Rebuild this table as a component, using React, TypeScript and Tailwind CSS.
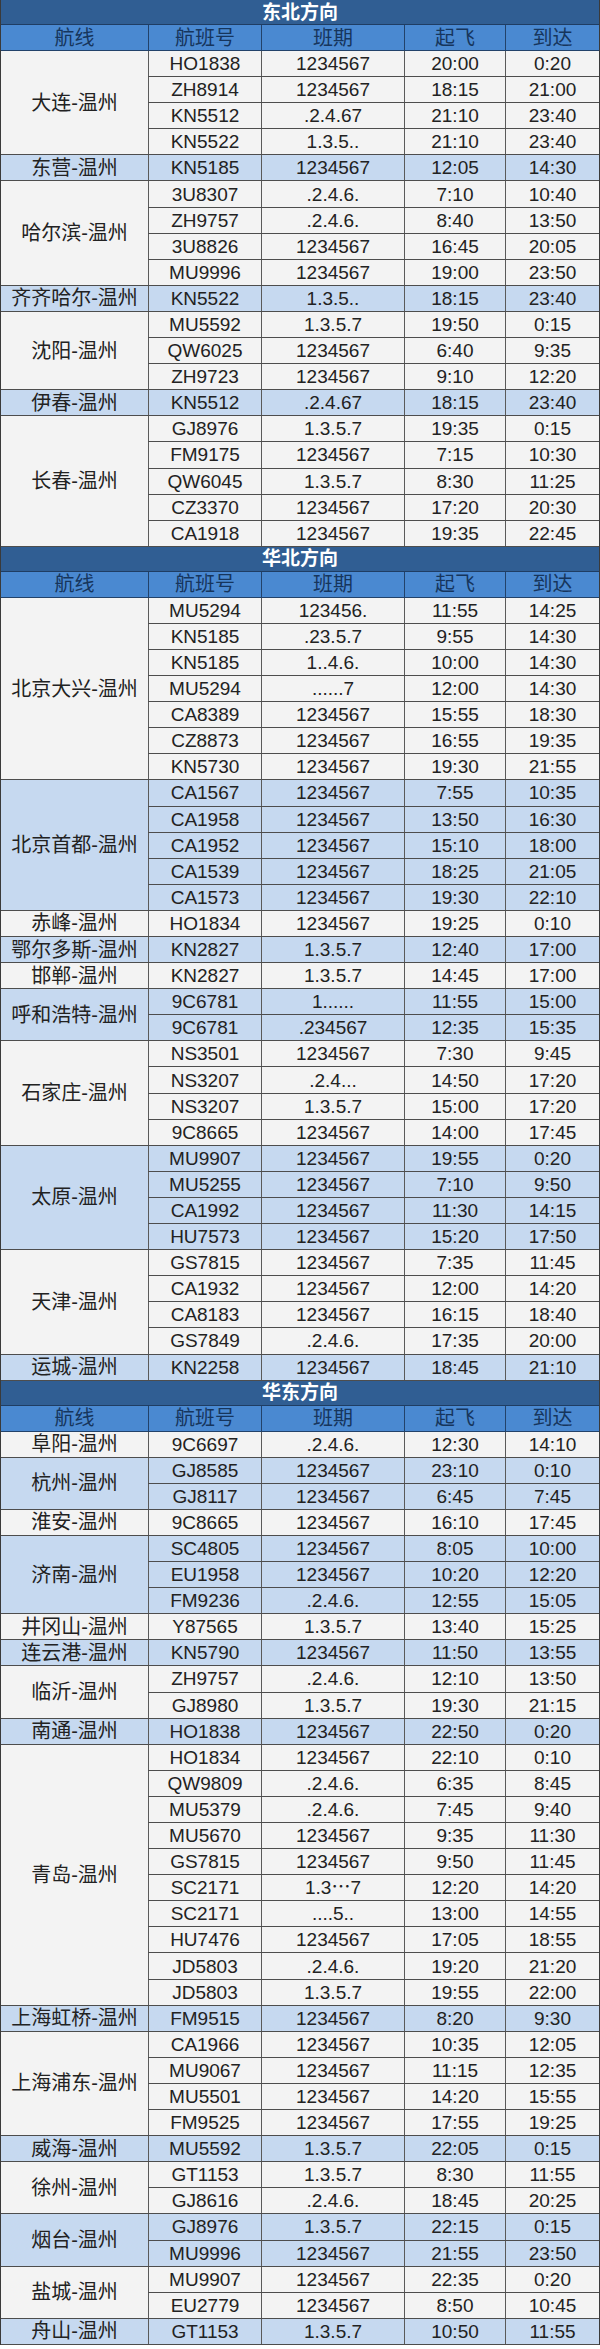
import React from "react";

type F = [string, string, string, string];
type G = [string, F[]];
type S = { title: string; groups: G[] };

const sections: S[] = [
  {
    title: "东北方向",
    groups: [
      ["大连-温州", [["HO1838", "1234567", "20:00", "0:20"], ["ZH8914", "1234567", "18:15", "21:00"], ["KN5512", ".2.4.67", "21:10", "23:40"], ["KN5522", "1.3.5..", "21:10", "23:40"]]],
      ["东营-温州", [["KN5185", "1234567", "12:05", "14:30"]]],
      ["哈尔滨-温州", [["3U8307", ".2.4.6.", "7:10", "10:40"], ["ZH9757", ".2.4.6.", "8:40", "13:50"], ["3U8826", "1234567", "16:45", "20:05"], ["MU9996", "1234567", "19:00", "23:50"]]],
      ["齐齐哈尔-温州", [["KN5522", "1.3.5..", "18:15", "23:40"]]],
      ["沈阳-温州", [["MU5592", "1.3.5.7", "19:50", "0:15"], ["QW6025", "1234567", "6:40", "9:35"], ["ZH9723", "1234567", "9:10", "12:20"]]],
      ["伊春-温州", [["KN5512", ".2.4.67", "18:15", "23:40"]]],
      ["长春-温州", [["GJ8976", "1.3.5.7", "19:35", "0:15"], ["FM9175", "1234567", "7:15", "10:30"], ["QW6045", "1.3.5.7", "8:30", "11:25"], ["CZ3370", "1234567", "17:20", "20:30"], ["CA1918", "1234567", "19:35", "22:45"]]],
    ],
  },
  {
    title: "华北方向",
    groups: [
      ["北京大兴-温州", [["MU5294", "123456.", "11:55", "14:25"], ["KN5185", ".23.5.7", "9:55", "14:30"], ["KN5185", "1..4.6.", "10:00", "14:30"], ["MU5294", "......7", "12:00", "14:30"], ["CA8389", "1234567", "15:55", "18:30"], ["CZ8873", "1234567", "16:55", "19:35"], ["KN5730", "1234567", "19:30", "21:55"]]],
      ["北京首都-温州", [["CA1567", "1234567", "7:55", "10:35"], ["CA1958", "1234567", "13:50", "16:30"], ["CA1952", "1234567", "15:10", "18:00"], ["CA1539", "1234567", "18:25", "21:05"], ["CA1573", "1234567", "19:30", "22:10"]]],
      ["赤峰-温州", [["HO1834", "1234567", "19:25", "0:10"]]],
      ["鄂尔多斯-温州", [["KN2827", "1.3.5.7", "12:40", "17:00"]]],
      ["邯郸-温州", [["KN2827", "1.3.5.7", "14:45", "17:00"]]],
      ["呼和浩特-温州", [["9C6781", "1......", "11:55", "15:00"], ["9C6781", ".234567", "12:35", "15:35"]]],
      ["石家庄-温州", [["NS3501", "1234567", "7:30", "9:45"], ["NS3207", ".2.4...", "14:50", "17:20"], ["NS3207", "1.3.5.7", "15:00", "17:20"], ["9C8665", "1234567", "14:00", "17:45"]]],
      ["太原-温州", [["MU9907", "1234567", "19:55", "0:20"], ["MU5255", "1234567", "7:10", "9:50"], ["CA1992", "1234567", "11:30", "14:15"], ["HU7573", "1234567", "15:20", "17:50"]]],
      ["天津-温州", [["GS7815", "1234567", "7:35", "11:45"], ["CA1932", "1234567", "12:00", "14:20"], ["CA8183", "1234567", "16:15", "18:40"], ["GS7849", ".2.4.6.", "17:35", "20:00"]]],
      ["运城-温州", [["KN2258", "1234567", "18:45", "21:10"]]],
    ],
  },
  {
    title: "华东方向",
    groups: [
      ["阜阳-温州", [["9C6697", ".2.4.6.", "12:30", "14:10"]]],
      ["杭州-温州", [["GJ8585", "1234567", "23:10", "0:10"], ["GJ8117", "1234567", "6:45", "7:45"]]],
      ["淮安-温州", [["9C8665", "1234567", "16:10", "17:45"]]],
      ["济南-温州", [["SC4805", "1234567", "8:05", "10:00"], ["EU1958", "1234567", "10:20", "12:20"], ["FM9236", ".2.4.6.", "12:55", "15:05"]]],
      ["井冈山-温州", [["Y87565", "1.3.5.7", "13:40", "15:25"]]],
      ["连云港-温州", [["KN5790", "1234567", "11:50", "13:55"]]],
      ["临沂-温州", [["ZH9757", ".2.4.6.", "12:10", "13:50"], ["GJ8980", "1.3.5.7", "19:30", "21:15"]]],
      ["南通-温州", [["HO1838", "1234567", "22:50", "0:20"]]],
      ["青岛-温州", [["HO1834", "1234567", "22:10", "0:10"], ["QW9809", ".2.4.6.", "6:35", "8:45"], ["MU5379", ".2.4.6.", "7:45", "9:40"], ["MU5670", "1234567", "9:35", "11:30"], ["GS7815", "1234567", "9:50", "11:45"], ["SC2171", "1.3\u22ef7", "12:20", "14:20"], ["SC2171", "....5..", "13:00", "14:55"], ["HU7476", "1234567", "17:05", "18:55"], ["JD5803", ".2.4.6.", "19:20", "21:20"], ["JD5803", "1.3.5.7", "19:55", "22:00"]]],
      ["上海虹桥-温州", [["FM9515", "1234567", "8:20", "9:30"]]],
      ["上海浦东-温州", [["CA1966", "1234567", "10:35", "12:05"], ["MU9067", "1234567", "11:15", "12:35"], ["MU5501", "1234567", "14:20", "15:55"], ["FM9525", "1234567", "17:55", "19:25"]]],
      ["威海-温州", [["MU5592", "1.3.5.7", "22:05", "0:15"]]],
      ["徐州-温州", [["GT1153", "1.3.5.7", "8:30", "11:55"], ["GJ8616", ".2.4.6.", "18:45", "20:25"]]],
      ["烟台-温州", [["GJ8976", "1.3.5.7", "22:15", "0:15"], ["MU9996", "1234567", "21:55", "23:50"]]],
      ["盐城-温州", [["MU9907", "1234567", "22:35", "0:20"], ["EU2779", "1234567", "8:50", "10:45"]]],
      ["舟山-温州", [["GT1153", "1.3.5.7", "10:50", "11:55"]]],
    ],
  },
];

const font = { fontFamily: "'Liberation Sans', 'Noto Sans CJK SC', sans-serif" };

function Section({ s }: { s: S }) {
  return (
    <div>
      <div className="h-[25px] bg-[#305e93] border-b border-[#1f3d63] flex items-center justify-center text-white font-bold text-[19px] leading-none">
        {s.title}
      </div>
      <div className="h-[26px] bg-[#4a89d1] border-b border-[#22426a] grid grid-cols-[147px_113px_143px_101px_1fr] text-[#16355c] text-[20px] leading-none">
        {["航线", "航班号", "班期", "起飞", "到达"].map((h, i) => (
          <div key={h} className={`flex items-center justify-center ${i > 0 ? "border-l border-[#22426a]" : ""}`}>
            {h}
          </div>
        ))}
      </div>
      {s.groups.map(([route, flights], gi) => {
        const bg = gi % 2 === 1 ? "bg-[#c6d9f0]" : "bg-[#f3f3f3]";
        return (
          <div key={route + gi} className={`flex ${bg}`}>
            <div className="w-[147px] shrink-0 flex items-center justify-center border-b border-[#4d4d4d] text-[20px] text-[#222] leading-none whitespace-nowrap">
              {route}
            </div>
            <div className="flex-1 flex flex-col">
              {flights.map((f, fi) => (
                <div key={fi} className="h-[26.1px] grid grid-cols-[113px_143px_101px_1fr] border-b border-[#4d4d4d] text-[19px] text-[#222] leading-none">
                  {f.map((c, ci) => (
                    <div key={ci} className="flex items-center justify-center border-l border-[#5a5a5a]">
                      {c}
                    </div>
                  ))}
                </div>
              ))}
            </div>
          </div>
        );
      })}
    </div>
  );
}

export default function App() {
  return (
    <div className="w-[600px] h-[2349px] bg-white" style={font}>
      <div className="border-l border-r border-[#3a3a3a]">
        {sections.map((s) => (
          <Section key={s.title} s={s} />
        ))}
      </div>
    </div>
  );
}
